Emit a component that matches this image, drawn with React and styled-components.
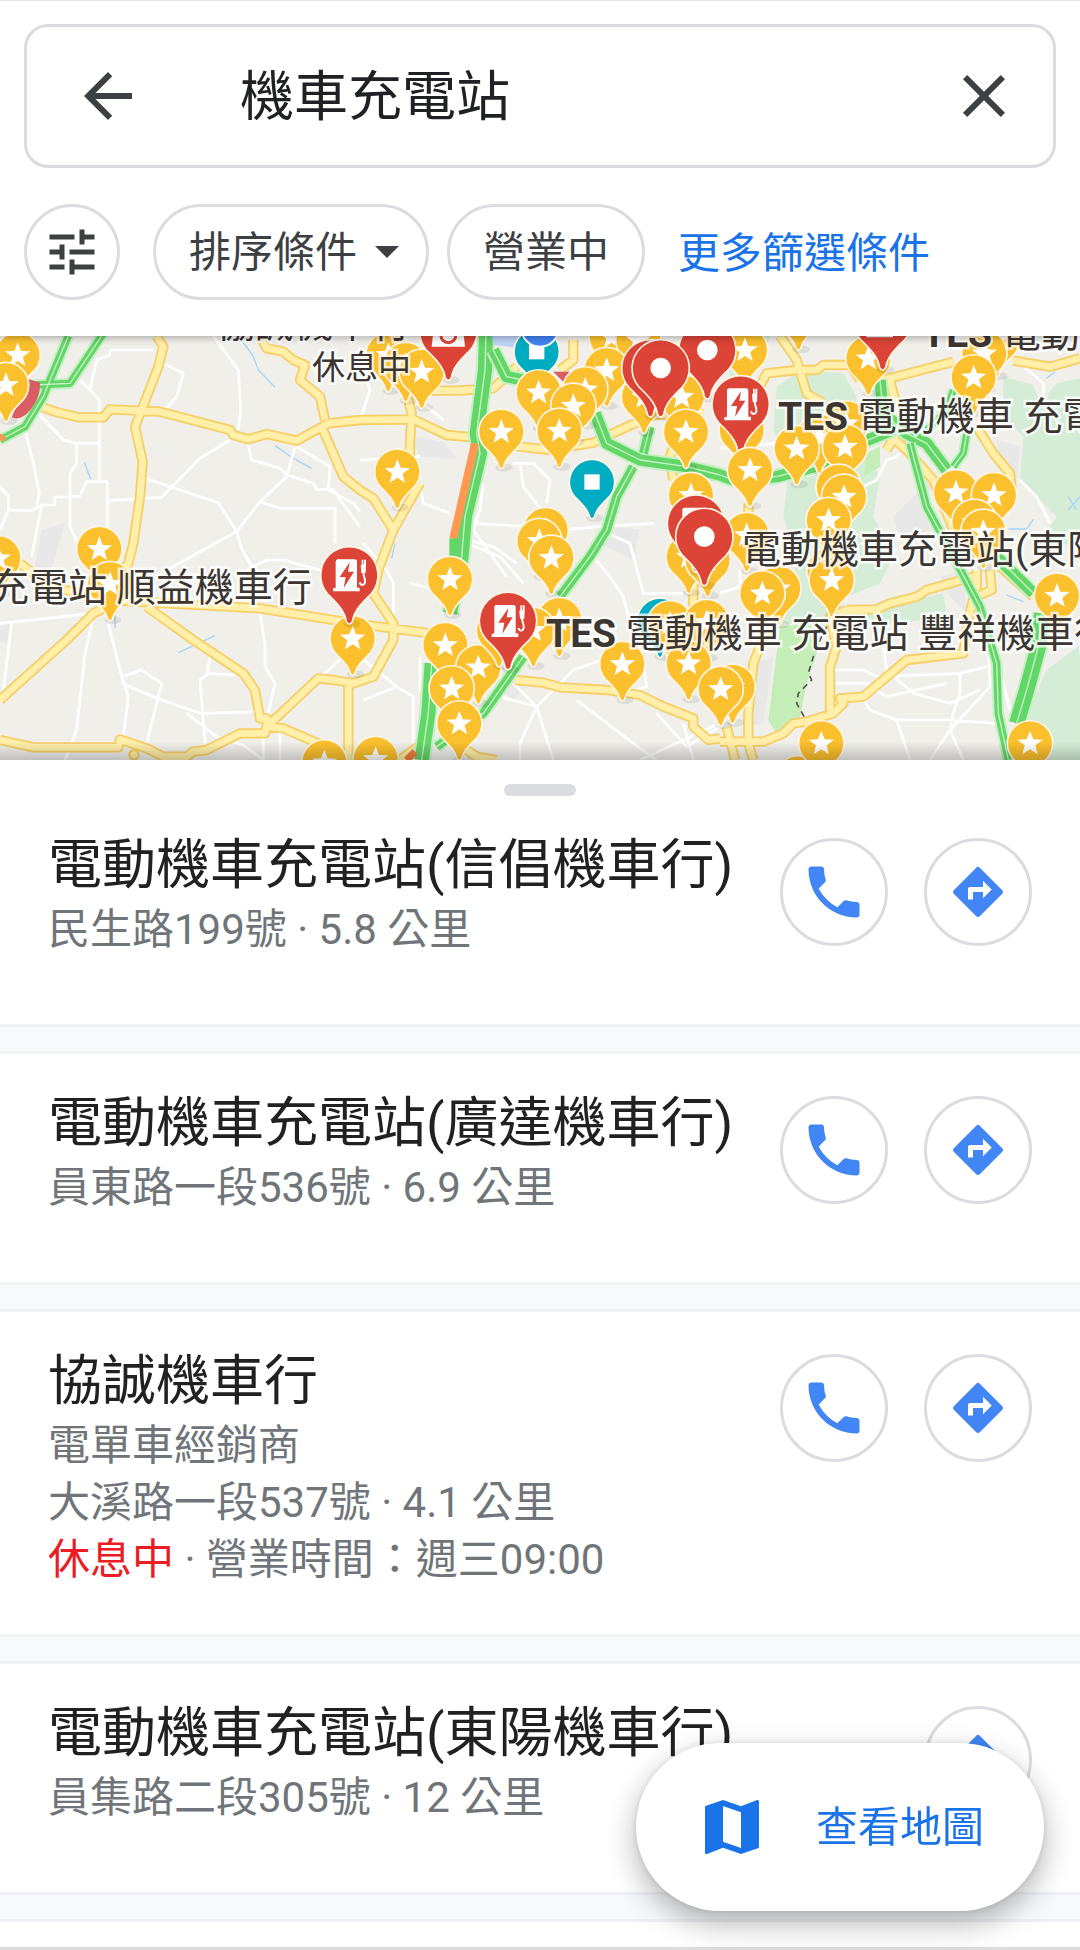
/* eslint-disable react/prop-types */
import { useState } from "react";
import styled, { createGlobalStyle } from "styled-components";
import {
  MdArrowBack,
  MdClose,
  MdTune,
  MdPhone,
  MdMap,
} from "react-icons/md";

const GlobalStyle = createGlobalStyle`
  * {
    box-sizing: border-box;
  }

  body {
    margin: 0;
    background: #fff;
    color: #202124;
    font-family: Roboto, "Noto Sans CJK TC", sans-serif;
  }

  button,
  input {
    font-family: inherit;
  }
`;

const Page = styled.div`
  display: flex;
  flex-direction: column;
  min-height: 100vh;
  border-bottom: 3px solid #dcdcdc;
`;

const Header = styled.header`
  position: relative;
  z-index: 1;
  display: flex;
  flex-direction: column;
  gap: 36px;
  padding: 23px 24px 36px;
  border-top: 1px solid #e4e4e4;
  background: #fff;
  box-shadow: 0 1px 8px rgba(0, 0, 0, 0.35);
`;

const SearchBox = styled.form`
  display: flex;
  align-items: center;
  height: 144px;
  padding: 0 33px 0 45px;
  border: 3px solid #dadce0;
  border-radius: 24px;
`;

const PlainButton = styled.button`
  display: flex;
  padding: 0;
  border: none;
  background: none;
  color: #3c4043;
  font-size: 72px;
  cursor: pointer;
`;

const SearchInput = styled.input`
  flex: 1;
  min-width: 0;
  height: 96px;
  margin-left: 96px;
  padding: 0 0 8px;
  border: none;
  outline: none;
  background: none;
  color: #202124;
  font-size: 54px;
`;

const Filters = styled.div`
  display: flex;
  align-items: center;
  gap: 18px;
`;

const Chip = styled.button`
  display: flex;
  align-items: center;
  gap: 18px;
  height: 96px;
  padding: 0 ${(props) => (props.$menu ? "27px" : "33px")} 0 33px;
  border: 3px solid #dadce0;
  border-radius: 48px;
  background: #fff;
  color: #3c4043;
  font-size: 42px;
  cursor: pointer;
`;

const RoundChip = styled(Chip)`
  justify-content: center;
  width: 96px;
  margin-right: 15px;
  padding: 0;
  font-size: 60px;
`;

const ButtonText = styled.span`
  padding-bottom: 8px;
`;

const Caret = styled.span`
  border: 12px solid transparent;
  border-top-color: #3c4043;
  border-bottom: none;
`;

const MoreLink = styled.a`
  margin-left: 15px;
  padding-bottom: 6px;
  color: #1a73e8;
  font-size: 42px;
  text-decoration: none;
`;

const MapArea = styled.section`
  position: relative;
  height: 424px;
  overflow: hidden;
  background: #f0efea;

  &::after {
    content: "";
    position: absolute;
    inset: auto 0 0;
    height: 18px;
    background: linear-gradient(transparent, rgba(0, 0, 0, 0.2));
  }
`;

const MapSvg = styled.svg`
  display: block;
  width: 100%;
  height: 100%;
`;

const MapLabel = styled.span`
  position: absolute;
  left: ${(props) => props.$x}px;
  top: ${(props) => props.$y}px;
  color: #3c3633;
  font-size: ${(props) => (props.$small ? "33px" : "39px")};
  line-height: 48px;
  white-space: nowrap;
  paint-order: stroke fill;
  -webkit-text-stroke: 5px rgba(255, 255, 255, 0.75);

  b {
    font-weight: 700;
  }
`;

const Sheet = styled.main`
  display: flex;
  flex: 1;
  flex-direction: column;
  background: #fff;
`;

const Handle = styled.div`
  width: 72px;
  height: 12px;
  margin: 24px auto 0;
  border-radius: 6px;
  background: #dadce0;
`;

const ResultList = styled.ul`
  display: flex;
  flex: 1;
  flex-direction: column;
  gap: 24px;
  margin: 0;
  padding: 0;
  background: #f8f9fb;
  list-style: none;
`;

const Result = styled.li`
  display: flex;
  justify-content: space-between;
  padding: 38px 48px 46px;
  border-bottom: 3px solid #eff1f4;
  background: #fff;

  &:not(:first-child) {
    border-top: 3px solid #eff1f4;
  }

  &:last-child {
    flex: 1;
    padding: 0;
    border-bottom: none;
  }
`;

const Name = styled.h2`
  margin: 0 0 3px;
  color: #212121;
  font-size: 54px;
  font-weight: 400;
  line-height: 64px;
`;

const Detail = styled.p`
  margin: 0;
  color: #70757a;
  font-size: 42px;
  line-height: 57px;
`;

const Closed = styled.span`
  color: #ec1c24;
`;

const Actions = styled.div`
  display: flex;
  flex-shrink: 0;
  align-items: flex-start;
  gap: 36px;
  padding: 4px 0 32px;
`;

const ActionButton = styled.button`
  display: flex;
  align-items: center;
  justify-content: center;
  width: 108px;
  height: 108px;
  padding: 0;
  border: 3px solid #dadce0;
  border-radius: 50%;
  background: #fff;
  color: #4285f4;
  font-size: 68px;
  cursor: pointer;
`;

const MapButton = styled.button`
  position: fixed;
  right: 36px;
  bottom: 39px;
  display: flex;
  align-items: center;
  gap: 48px;
  height: 168px;
  padding: 0 60px;
  border: none;
  border-radius: 84px;
  background: #fff;
  box-shadow: 0 12px 30px rgba(0, 0, 0, 0.3), 0 0 6px rgba(0, 0, 0, 0.1);
  color: #1a73e8;
  font-size: 42px;
  cursor: pointer;

  svg {
    font-size: 72px;
  }
`;

const results = [
  {
    name: "電動機車充電站(信倡機車行)",
    address: "民生路199號 · 5.8 公里",
    phone: true,
  },
  {
    name: "電動機車充電站(廣達機車行)",
    address: "員東路一段536號 · 6.9 公里",
    phone: true,
  },
  {
    name: "協誠機車行",
    category: "電單車經銷商",
    address: "大溪路一段537號 · 4.1 公里",
    hours: "營業時間：週三09:00",
    phone: true,
  },
  {
    name: "電動機車充電站(東陽機車行)",
    address: "員集路二段305號 · 12 公里",
    phone: false,
  },
];

// map drawing uses three units for each css pixel
const greyAreas = [
  "M125 600L195 578L150 735L100 735Z",
  "M1230 320L1330 335L1370 385L1260 380Z",
  "M2720 560L2790 480L2800 420L2690 600Z",
  "M2680 560L2760 480L2790 600L2700 620Z",
  "M2990 330L3060 350L3050 450L2990 400Z",
  "M1800 640L1850 590L1920 600L1900 690Z",
  "M2820 740L2890 720L2900 850L2850 800Z",
  "M2260 1000L2320 980L2290 1180L2240 1190Z",
  "M1480 1060L1590 1050L1540 1110Z",
  "M0 890L30 880L20 940L0 935Z",
];

const parks = [
  "M2330 170L2400 120L2530 130L2570 200L2560 290L2640 440L2620 560L2680 680L2640 760L2540 800L2480 890L2350 880L2390 690L2350 560L2370 400L2320 300Z",
  "M3010 140L3100 165L3120 220L3170 160L3240 145L3240 640L3110 650L3170 560L3060 450L3070 320L3010 260Z",
  "M3240 945L3140 1020L3090 1130L3040 1200L3030 1290L3240 1290Z",
  "M2540 850L2830 790L2840 860L2600 890Z",
  "M2180 18L2310 18L2290 80L2190 150Z",
  "M1960 130L2100 60L2180 100L2090 240L1980 220Z",
];

const woods = [
  "M2340 890L2430 880L2460 940L2420 1060L2400 1160L2330 1210L2305 1170Z",
  "M2600 370L2640 350L2640 410L2590 440Z",
];

const streets =
  "M330 60H460M330 60V75L290 90L270 180L240 150M490 100L550 130L530 200L490 245" +
  "M270 180L298 210V450M110 245L190 330L230 340H298M230 340V400L210 430V590L270 720" +
  "M0 470L25 500V540L95 542L125 525L165 525V502L240 498L260 455H322V590" +
  "M75 300L100 400L118 490L110 525M125 525L95 680M25 540L0 600M325 512L485 502L600 385L690 330" +
  "M435 445L655 518L710 605L500 720M710 605L780 515L860 440L885 350M710 605L725 655L760 720" +
  "M745 345L755 390L840 415L860 435L940 460L950 478H1000L1020 510L1080 590M780 515L840 535H1010" +
  "M890 350L990 410L985 480L1060 520L1080 545M1005 540V640M640 18L715 120L722 240L715 300" +
  "M0 880L280 850M35 880L10 1080M280 860L255 970L230 1200L195 1290M325 880L365 1040L385 1100L370 1220" +
  "M365 1040L425 1020L485 1060L465 1140L440 1240M365 1060L470 1105L600 1150L780 1145M630 980L620 1035L600 1050L615 1240" +
  "M560 1150L650 1220L730 1245L790 1290M620 1030L710 1035M780 850L795 940V1010L825 1060L805 1150M790 1200V1290M840 1200V1290" +
  "M1050 960L970 1035M740 720L800 690H850L960 720M1080 80L1110 180L1080 270M1230 190L1330 270M1080 390L1260 380" +
  "M1260 460L1270 520L1350 550M1420 580L1590 590L1680 600L1800 590L1960 580M1450 460L1440 540L1420 600L1520 740" +
  "M1540 400L1600 400L1650 450L1640 520M1560 400L1570 470L1640 560M1780 680L1830 740L1870 800L1900 920M1800 600L1890 640L1930 790H2050" +
  "M1400 640L1500 680L1570 760M1360 620L1480 650L1550 700M1090 640L1160 720L1180 760L1180 850M1080 980L1190 1070L1240 1100V1290M1190 1070L1090 1110" +
  "M1500 1100L1610 1130L1560 1240V1290M1610 1130L1660 1290M1540 1060L1610 1130L1720 1020L1920 950M1730 1110L1900 1240L1970 1290M1970 1150L2060 1250L2160 1190" +
  "M1360 1190L1400 1290M1230 760L1320 780M1260 980V1080M1930 1000L1940 1070L1870 1090M2050 1180L2080 1290M1920 1290L2160 1180" +
  "M2400 440L2460 430L2500 390L2570 370M2700 370L2690 380L2660 390L2630 450L2590 470M3060 450L3110 500L3150 580" +
  "M3060 100L3130 160V210M2690 660L2580 640M2500 1020L2590 1020L2630 1040L2880 1030L2960 1010M2510 1060L2600 1060L2660 1100L2840 1060" +
  "M2650 950L2660 1020L2740 1090L2850 1120L2940 1080M2590 1110L2610 1140L2690 1170L2730 1290M2690 1170L2840 1170L2990 1180" +
  "M2790 1290L2850 1200L2970 1070L2960 850M2880 1030L2880 1090L2860 1150L2850 1200L2890 1290M2300 930L2270 1000M2160 790L2220 770M2960 930L3010 1060L3040 1180" +
  "M3120 1040L3060 1110M2220 770V720M2160 355L2330 340";

const mainRoads =
  "M470 18L490 50L475 110L425 240L405 290L428 395L420 500L400 640L385 700L330 770" +
  "M110 225L165 245L235 262H310L330 238L480 245L690 300L700 315L745 328L800 312L890 332L985 280L1080 270L1240 268L1340 315L1420 322L1560 350L1650 360L1780 338L1860 300L1960 255L2110 250" +
  "M780 18L800 55L850 65L880 90L915 105L900 150L960 200L975 270" +
  "M965 290L1030 440L1080 480L1120 505L1180 600L1260 460" +
  "M1180 600L1135 720L1120 790L1180 880V930L1120 1040L1060 1060L1000 1050L955 1045L800 1190L795 1210H720L620 1260L580 1265L560 1280H490L440 1255L360 1228L355 1252H100L0 1230" +
  "M60 700L150 770L330 810L500 820L780 835L1000 870L1100 885L1290 910" +
  "M0 1110L200 930L280 850L340 820" +
  "M440 830L580 930L730 1030L765 1080L780 1165H800V1190L850 1195L1000 1260" +
  "M1045 1060V1290M1220 190L1235 250L1230 340V420M1260 182H1370L1480 175L1550 110M1720 30V90L1680 120" +
  "M1545 1050L1630 1058L1680 1072L1820 1080L1920 1095L1990 1130L2080 1165V1190L2125 1230L2160 1225" +
  "M2160 1235H2290L2350 1210L2380 1180L2420 1175L2500 1150L2530 1120L2520 1105L2590 1100L2720 990L2890 970L2905 870L2930 760" +
  "M2540 840L2630 838L2670 820L2750 800L2780 780L2920 740M2540 840L2490 860L2510 950L2490 1010V1160" +
  "M2340 18L2390 90L2420 190L2470 220M2240 250L2300 130L2390 120L2450 120L2470 105L2550 105L2580 150M2650 150L2860 95M3040 92L3150 110L3240 85" +
  "M2930 290L2980 370L3030 430L3035 480M2640 290L2720 360L2800 450L2860 600M3000 710L3100 800M2970 720L2975 780L2940 795M2930 720V780M2670 150L2690 230" +
  "M2300 900L2260 1000L2245 1150V1240L2260 1290M2180 1190L2205 1290M2030 320L2010 380L2020 450M2080 760V860M2245 520V600M2660 360L2700 290" +
  "M1400 1260L1430 1280L1490 1290M1200 1290L1280 1230";

const traffic = [
  { d: "M310 10L210 160L100 165M205 18L150 150L130 200L75 290L0 330", w: 22 },
  { d: "M1458 10L1455 120L1430 310L1440 370L1395 560L1385 680L1350 850M1295 1000L1285 1150L1265 1290", w: 42 },
  { d: "M1480 60L1520 140L1570 150M1785 250L1820 340L1920 390L2060 410L2160 435L2200 450L2330 440L2460 405L2580 340L2700 290", w: 34 },
  { d: "M1950 290L1930 370M1900 410L1850 500L1820 600L1770 680L1680 800M1570 980L1450 1150L1310 1250", w: 26 },
  { d: "M2640 150L2650 250L2720 310L2780 340L2840 420", w: 34 },
  { d: "M2990 680L3100 790", w: 34 },
  { d: "M3125 850L3115 950L3080 1080L3050 1180", w: 46 },
  { d: "M2730 340L2780 530L2860 680L2940 830L2990 1000L2995 1150L3025 1290", w: 22 },
  { d: "M2860 180L2840 240L2780 300M2900 310L2890 370L2860 410", w: 20 },
];

const pins = [
  ["star", 53, 75],
  ["star", 18, 165],
  ["star", 298, 657],
  ["star", -5, 685],
  ["star", 330, 762],
  ["star", 1058, 925],
  ["charger", 1048, 735],
  ["star", 973, 1297],
  ["star", 1127, 1287],
  ["star", 1165, 75],
  ["star", 1217, 105],
  ["star", 1265, 125],
  ["shop", 1345, 4],
  ["star", 1835, 20],
  ["star", 1915, 30],
  ["stop", 1610, 65],
  ["star", 1820, 120],
  ["star", 1616, 187],
  ["star", 1756, 178],
  ["star", 1720, 227],
  ["star", 1504, 305],
  ["star", 1678, 302],
  ["star", 1192, 425],
  ["star", 1932, 200],
  ["star", 2045, 200],
  ["star", 2235, 60],
  ["place", 2122, 60],
  ["place", 1951, 114],
  ["place", 1982, 114],
  ["star", 2058, 305],
  ["star", 2073, 495],
  ["stop", 1776, 456],
  ["star", 1637, 600],
  ["star", 1618, 633],
  ["star", 1654, 683],
  ["star", 2066, 680],
  ["star", 2123, 690],
  ["charger", 2088, 580],
  ["star", 1350, 747],
  ["star", 1336, 945],
  ["star", 1435, 1012],
  ["star", 1355, 1075],
  ["star", 1378, 1180],
  ["star", 1678, 870],
  ["star", 1600, 900],
  ["star", 1497, 900],
  ["charger", 1524, 872],
  ["stop", 1980, 872],
  ["star", 2010, 880],
  ["star", 2120, 876],
  ["star", 1867, 1002],
  ["star", 2066, 1000],
  ["star", 2395, -50],
  ["star", 2605, 85],
  ["charger", 2648, -27],
  ["star", 2990, 30],
  ["star", 2953, 70],
  ["star", 2921, 142],
  ["star", 2225, 300],
  ["charger", 2222, 222],
  ["star", 2250, 420],
  ["star", 2538, 280],
  ["star", 2458, 320],
  ["star", 2390, 355],
  ["star", 2535, 350],
  ["star", 2516, 470],
  ["star", 2532, 500],
  ["star", 2486, 570],
  ["star", 2240, 615],
  ["place", 2113, 620],
  ["star", 2868, 487],
  ["star", 2982, 495],
  ["star", 2923, 575],
  ["star", 2950, 605],
  ["star", 2488, 720],
  ["star", 2495, 750],
  ["star", 2335, 775],
  ["star", 2287, 790],
  ["star", 3171, 797],
  ["star", 3090, 1240],
  ["star", 2395, 1345],
  ["star", 2464, 1240],
  ["star", 2198, 1070],
  ["star", 2162, 1077],
];

const smallPin =
  "M-52 44C-24 72 -11 86 -7 105Q0 117 7 105C11 86 24 72 52 44A68 68 0 1 0 -52 44Z";
const bigPin =
  "M-65 57C-30 90 -13 112 -9 140Q0 154 9 140C13 112 30 90 65 57A86 86 0 1 0 -65 57Z";

function Pin({ kind, x, y }) {
  const big = kind !== "star" && kind !== "stop";
  const fill = big ? "#db4437" : kind === "stop" ? "#00acc1" : "#fbc02d";

  return (
    <g transform={`translate(${x} ${y})`}>
      <ellipse cx="8" cy={big ? 146 : 108} rx="26" ry="12" opacity="0.08" />
      <path d={big ? bigPin : smallPin} fill={fill} stroke="#fff6e6" strokeWidth="5" />
      {kind === "star" && (
        <path
          fill="#fff"
          d="M0 -38L10 -12L38 -11L16 6L23 33L0 18L-23 33L-16 6L-38 -11L-10 -12Z"
        />
      )}
      {kind === "stop" && <path fill="#fff" d="M-23 -23H23V23H-23Z" />}
      {kind === "place" && <circle r="31" fill="#fff" />}
      {kind === "shop" && (
        <>
          <path fill="#fff" d="M-42 -26H42L50 46H-50Z" />
          <path d="M-22 4V14A22 20 0 0 0 22 14V4" fill="none" stroke="#db4437" strokeWidth="9" />
        </>
      )}
      {kind === "charger" && (
        <g fill="#fff">
          <path d="M-34 -47H16Q23 -47 23 -40V38H31V49H-49V40L-41 38V-40Q-41 -47 -34 -47Z" />
          <path fill="#db4437" d="M1 -38L-29 6H-11L-17 39L14 -10H-4Z" />
          <path d="M37 -46H42V-32H44V-46H50V-30L49 -6H36L34 -30H37Z" />
          <path
            d="M42 -8C42 6 50 14 47 22C44 32 35 33 31 22"
            fill="none"
            stroke="#fff"
            strokeWidth="6"
          />
        </g>
      )}
    </g>
  );
}

function MapDrawing() {
  return (
    <MapSvg viewBox="0 18 3240 1272" preserveAspectRatio="xMidYMid slice" aria-hidden="true">
      {parks.map((d) => (
        <path key={d} d={d} fill="#d5edd7" />
      ))}
      {greyAreas.map((d) => (
        <path key={d} d={d} fill="#e8e8e8" />
      ))}
      {woods.map((d) => (
        <path key={d} d={d} fill="#c5edb8" />
      ))}
      <g fill="none" strokeLinejoin="round">
        <path
          d="M725 30L760 80L775 120L825 172M253 397L272 448M825 347L880 385L935 415M535 968L645 917M345 855V895M1185 640L1175 685M3025 597H3080L3100 568M3020 795L3070 815M3140 145L3165 125M3205 540L3240 500M3205 500L3230 540"
          stroke="#a5d6fa"
          strokeWidth="4"
        />
        <path d={streets} stroke="#fff" strokeWidth="8" />
        <path d={mainRoads} stroke="#f6cf66" strokeWidth="31" />
        <path d={mainRoads} stroke="#ffefa9" strokeWidth="20" />
        {traffic.map(({ d, w }) => (
          <g key={d}>
            <path d={d} stroke="#c8f0c5" strokeWidth={w + 12} />
            <path d={d} stroke="#63d668" strokeWidth={w} />
            <path d={d} stroke="#c8f3c6" strokeWidth="4" />
          </g>
        ))}
        <path d="M1425 340L1360 625" stroke="#ff9850" strokeWidth="24" />
        <path d="M1220 1290L1245 1265" stroke="#f08040" strokeWidth="22" />
        <path d="M0 330L8 315" stroke="#ff9850" strokeWidth="24" />
        <path d="M1360 625V680" stroke="#63d668" strokeWidth="24" />
        <path
          d="M2480 890L2460 930L2440 980L2425 1030L2435 1050L2395 1090L2390 1120L2415 1165"
          stroke="#555"
          strokeWidth="5"
          strokeDasharray="18 14"
        />
        <circle cx="402" cy="1274" r="14" fill="#ffefa9" stroke="#f6cf66" strokeWidth="7" />
      </g>
      <path fill="#d95d62" d="M85 147L120 158Q122 200 95 235Q65 275 35 262Z" />
      <path fill="#d95d62" d="M1660 125H1710L1690 155Z" />
      <path fill="#a8c7fa" opacity="0.7" d="M1470 10H1570L1560 55L1480 45Z" />
      {pins.map(([kind, x, y]) => (
        <Pin key={`${x}-${y}`} kind={kind} x={x} y={y} />
      ))}
      <circle cx="1620" cy="-6" r="56" fill="#4285f4" stroke="#fff" strokeWidth="6" />
    </MapSvg>
  );
}

function DirectionsIcon() {
  return (
    <svg width="60" height="60" viewBox="0 0 24 24" fill="currentColor" aria-hidden="true">
      <path d="M21.71 11.29l-9-9a1 1 0 0 0-1.41 0l-9 9a1 1 0 0 0 0 1.41l9 9c.39.39 1.02.39 1.41 0l9-9a1 1 0 0 0 0-1.41zM14 14.5V12h-4v3H8v-4.2c0-.44.36-.8.8-.8H14V7.5l3.5 3.5-3.5 3.5z" />
    </svg>
  );
}

function ResultRow({ result }) {
  const { name, category, address, hours, phone } = result;

  return (
    <Result>
      <div>
        <Name>{name}</Name>
        {category && <Detail>{category}</Detail>}
        <Detail>{address}</Detail>
        {hours && (
          <Detail>
            <Closed>休息中</Closed> · {hours}
          </Detail>
        )}
      </div>
      <Actions>
        {phone && (
          <ActionButton aria-label="致電">
            <MdPhone />
          </ActionButton>
        )}
        <ActionButton aria-label="路線">
          <DirectionsIcon />
        </ActionButton>
      </Actions>
    </Result>
  );
}

function App() {
  const [query, setQuery] = useState("機車充電站");

  return (
    <>
      <GlobalStyle />
      <Page>
        <Header>
          <SearchBox onSubmit={(e) => e.preventDefault()}>
            <PlainButton type="button" aria-label="返回">
              <MdArrowBack />
            </PlainButton>
            <SearchInput
              aria-label="搜尋"
              value={query}
              onChange={(e) => setQuery(e.target.value)}
            />
            <PlainButton type="button" aria-label="清除" onClick={() => setQuery("")}>
              <MdClose />
            </PlainButton>
          </SearchBox>
          <Filters>
            <RoundChip aria-label="篩選">
              <MdTune />
            </RoundChip>
            <Chip $menu>
              <ButtonText>排序條件</ButtonText>
              <Caret />
            </Chip>
            <Chip>
              <ButtonText>營業中</ButtonText>
            </Chip>
            <MoreLink href="#filters">更多篩選條件</MoreLink>
          </Filters>
        </Header>

        <MapArea>
          <MapDrawing />
          <MapLabel $x={216} $y={-36}>協誠機車行</MapLabel>
          <MapLabel $x={312} $y={8} $small>休息中</MapLabel>
          <MapLabel $x={922} $y={-26}>
            <b>TES</b> 電動機車 充電站
          </MapLabel>
          <MapLabel $x={778} $y={57}>
            <b>TES</b> 電動機車 充電站
          </MapLabel>
          <MapLabel $x={742} $y={190}>電動機車充電站(東陽機車行)</MapLabel>
          <MapLabel $x={-10} $y={228}>充電站 順益機車行</MapLabel>
          <MapLabel $x={546} $y={274}>
            <b>TES</b> 電動機車 充電站 豐祥機車行
          </MapLabel>
        </MapArea>

        <Sheet>
          <Handle />
          <ResultList>
            {results.map((result) => (
              <ResultRow key={result.name} result={result} />
            ))}
            <Result />
          </ResultList>
        </Sheet>

        <MapButton>
          <MdMap />
          <ButtonText>查看地圖</ButtonText>
        </MapButton>
      </Page>
    </>
  );
}

export default App;
